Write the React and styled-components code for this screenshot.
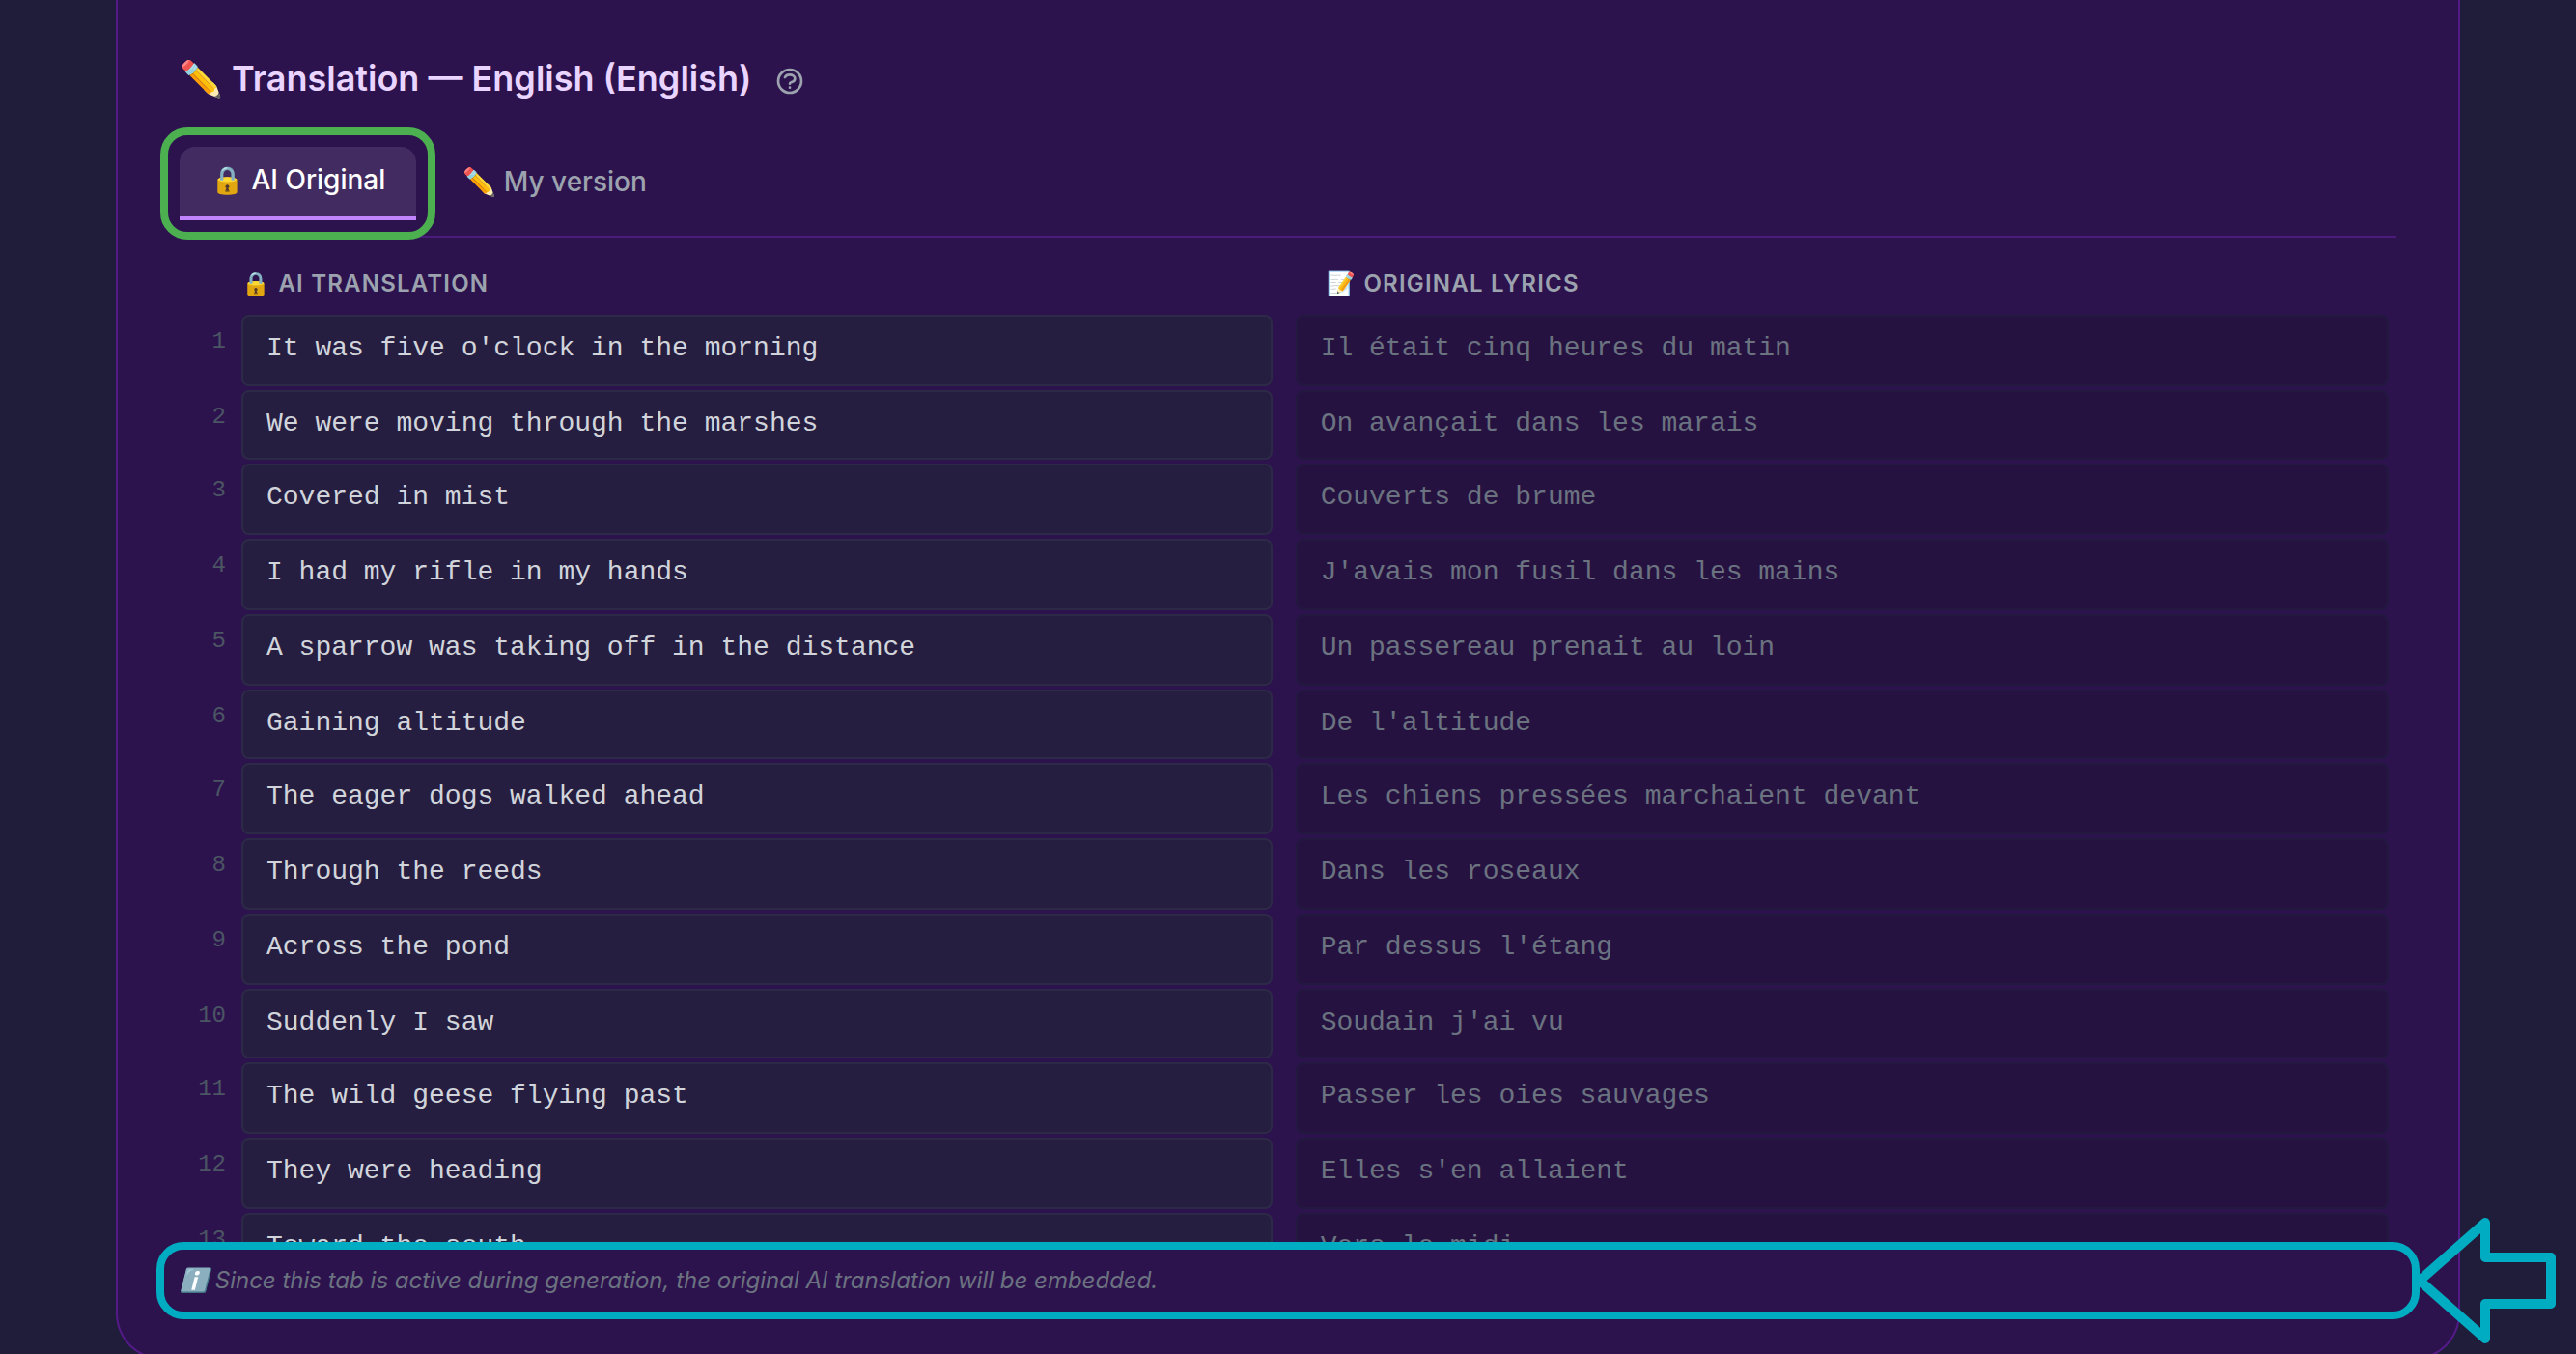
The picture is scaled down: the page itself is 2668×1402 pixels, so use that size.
import React, { useState } from 'react';
import styled, { createGlobalStyle } from 'styled-components';

const LINES = [
  ["It was five o'clock in the morning", 'Il était cinq heures du matin'],
  ['We were moving through the marshes', 'On avançait dans les marais'],
  ['Covered in mist', 'Couverts de brume'],
  ['I had my rifle in my hands', "J'avais mon fusil dans les mains"],
  ['A sparrow was taking off in the distance', 'Un passereau prenait au loin'],
  ['Gaining altitude', "De l'altitude"],
  ['The eager dogs walked ahead', 'Les chiens pressées marchaient devant'],
  ['Through the reeds', 'Dans les roseaux'],
  ['Across the pond', "Par dessus l'étang"],
  ['Suddenly I saw', "Soudain j'ai vu"],
  ['The wild geese flying past', 'Passer les oies sauvages'],
  ['They were heading', "Elles s'en allaient"],
  ['Toward the south', 'Vers le midi'],
];

function App() {
  const [tab, setTab] = useState('ai');

  return (
    <Page>
      <GlobalStyle />
      <Card>
        <Heading>
          <Title>✏️ Translation — English (English)</Title>
          <HelpButton aria-label="Help">
            <HelpIcon viewBox="0 0 24 24" aria-hidden="true">
              <path d="M8.228 9c.549-1.165 2.03-2 3.772-2 2.21 0 4 1.343 4 3 0 1.4-1.278 2.575-3.006 2.907-.542.104-.994.54-.994 1.093m0 3h.01" />
              <circle cx="12" cy="12" r="9" />
            </HelpIcon>
          </HelpButton>
        </Heading>

        <Tabs role="tablist">
          <Tab role="tab" aria-selected={tab === 'ai'} $active={tab === 'ai'} onClick={() => setTab('ai')}>
            🔒 AI Original
            <TabHighlight />
          </Tab>
          <Tab role="tab" aria-selected={tab === 'mine'} $active={tab === 'mine'} onClick={() => setTab('mine')}>
            ✏️ My version
          </Tab>
        </Tabs>

        <Columns>
          <ColumnTitle>🔒 AI Translation</ColumnTitle>
          <ColumnTitle $inset>📝 Original lyrics</ColumnTitle>
        </Columns>

        <Lines>
          {LINES.map(([translation, original], i) => (
            <Line key={translation}>
              <LineNumber>{i + 1}</LineNumber>
              <LineText readOnly rows={1} aria-label={`Translation, line ${i + 1}`} value={translation} />
              <LineText $muted readOnly rows={1} aria-label={`Original, line ${i + 1}`} value={original} />
            </Line>
          ))}
        </Lines>

        <Hint>
          ℹ️ Since this tab is active during generation, the original AI translation will be embedded.
          <HintHighlight />
          <Arrow viewBox="0 0 150 132" aria-hidden="true">
            <path d="M6 66 L74 6 V42 H142 V90 H74 V126 Z" />
          </Arrow>
        </Hint>
      </Card>
    </Page>
  );
}

export default App;

// STYLES
const GlobalStyle = createGlobalStyle`
  * {
    box-sizing: border-box;
  }

  body {
    margin: 0;
    background: #201d3b;
    font-family: Inter, sans-serif;
  }
`;

const Page = styled.main`
  height: 100vh;
  padding: 0 120px;
  overflow: hidden;
`;

const Card = styled.section`
  padding: 56px 64px 64px;
  border: 2px solid #531a88;
  border-top: none;
  border-radius: 0 0 48px 48px;
  background: #2d134e;
`;

const Heading = styled.header`
  display: flex;
  align-items: center;
  gap: 24px;
  height: 50px;
`;

const Title = styled.h2`
  margin: 0;
  color: #e9d5ff;
  font-size: 36px;
  font-weight: 600;
  line-height: 50px;
`;

const HelpButton = styled.button`
  display: flex;
  margin-top: 6px;
  padding: 0;
  border: none;
  background: none;
  color: #9ca3af;
  cursor: pointer;
`;

const HelpIcon = styled.svg`
  width: 32px;
  height: 32px;
  fill: none;
  stroke: currentColor;
  stroke-width: 2;
  stroke-linecap: round;
  stroke-linejoin: round;
`;

const Tabs = styled.div`
  display: flex;
  gap: 16px;
  margin-top: 46px;
  padding-bottom: 16px;
  border-bottom: 2px solid #4c1a7d;
`;

const Tab = styled.button`
  position: relative;
  height: 76px;
  padding: 0 32px 4px;
  border: none;
  border-bottom: ${(props) => (props.$active ? '4px solid #c084fc' : 'none')};
  border-radius: ${(props) => (props.$active ? '16px 16px 0 0' : '16px')};
  background: ${(props) => (props.$active ? 'rgba(255, 255, 255, 0.1)' : 'none')};
  color: ${(props) => (props.$active ? '#ffffff' : '#9ca3af')};
  font-family: inherit;
  font-size: 28px;
  font-weight: 500;
  cursor: pointer;
`;

const TabHighlight = styled.span`
  position: absolute;
  inset: -20px -20px -24px;
  border: 8px solid #4caf50;
  border-radius: 28px;
  pointer-events: none;
`;

const Columns = styled.div`
  display: grid;
  grid-template-columns: 267fr 283fr;
  gap: 24px;
  padding: 32px 8px 16px 64px;
`;

const ColumnTitle = styled.h3`
  margin: 0;
  padding-left: ${(props) => (props.$inset ? '32px' : '0')};
  color: #9ca3af;
  font-size: 24px;
  font-weight: 600;
  line-height: 32px;
  letter-spacing: 0.05em;
  text-transform: uppercase;
`;

const Lines = styled.div`
  display: flex;
  flex-direction: column;
  gap: 4px;
  height: 964px;
  padding: 0 8px;
  overflow: hidden;
`;

const LineText = styled.textarea`
  height: 74px;
  padding: 12px 24px;
  border: 2px solid ${(props) => (props.$muted ? '#231840' : '#2c2a47')};
  border-radius: 8px;
  outline: none;
  background: ${(props) => (props.$muted ? '#251240' : '#261e40')};
  color: ${(props) => (props.$muted ? '#6b7280' : '#d1d5db')};
  font-family: 'Liberation Mono', monospace;
  font-size: 28px;
  line-height: 42px;
  resize: none;
  overflow: hidden;
`;

const Line = styled.div`
  display: grid;
  grid-template-columns: 56px 267fr 283fr;
  flex-shrink: 0;

  ${LineText}:nth-child(2) {
    margin-right: 12px;
  }

  ${LineText}:last-child {
    margin-left: 12px;
  }

  &:nth-child(4n + 2) ${LineText} {
    height: 72px;
  }
`;

const LineNumber = styled.span`
  padding: 10px 16px 0 0;
  color: #4b5563;
  font-family: 'Liberation Mono', monospace;
  font-size: 24px;
  line-height: 36px;
  text-align: right;
`;

const Hint = styled.p`
  position: relative;
  margin: 20px 0 0;
  color: #6b7280;
  font-size: 24px;
  font-style: italic;
  line-height: 32px;
`;

const HintHighlight = styled.span`
  position: absolute;
  inset: -24px;
  border: 8px solid #00acc1;
  border-radius: 28px;
`;

const Arrow = styled.svg`
  position: absolute;
  top: -50px;
  left: calc(100% + 18px);
  width: 150px;
  height: 132px;
  fill: none;
  stroke: #00acc1;
  stroke-width: 10;
  stroke-linejoin: round;
`;
